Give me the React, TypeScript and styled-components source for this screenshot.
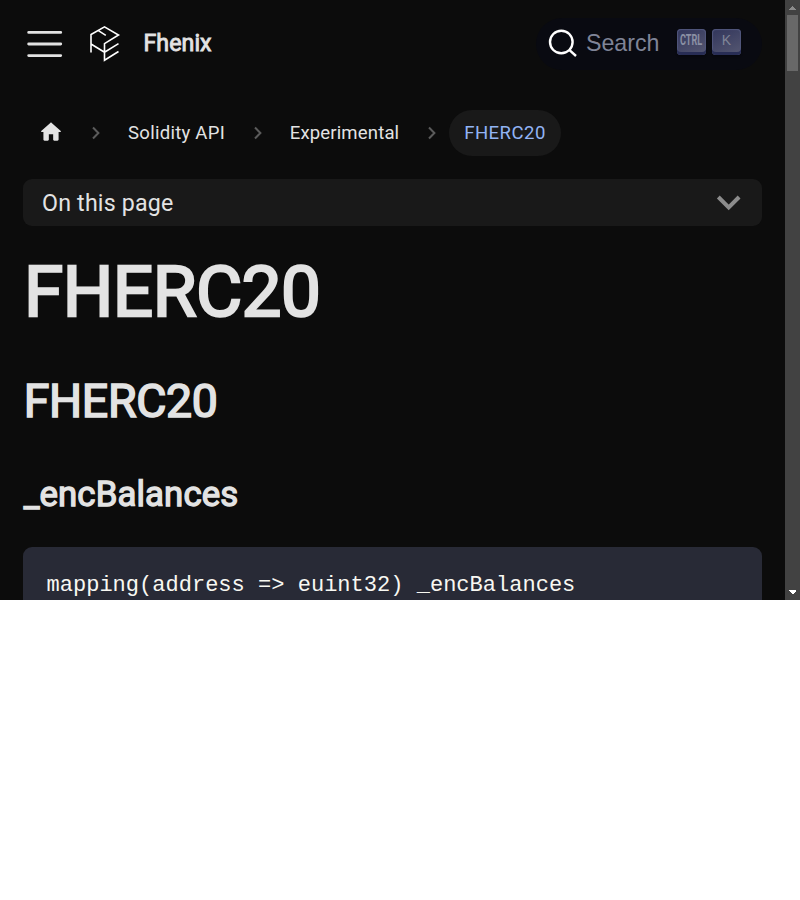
import React from "react";
import styled, { createGlobalStyle } from "styled-components";

const Global = createGlobalStyle`
  *, *::before, *::after { box-sizing: border-box; }
  body { margin: 0; background: #fff; }
  h1, h2, h3, pre, p { margin: 0; }
`;

const Window = styled.div`
  display: flex;
  width: 800px;
  height: 600px;
  overflow: hidden;
  background: #0c0c0c;
  color: #e3e3e3;
  font-family: Roboto, sans-serif;
`;
const Page = styled.div`
  width: 785px;
  height: 600px;
  overflow: hidden;
`;
const Navbar = styled.header`
  display: flex;
  align-items: center;
  height: 87px;
  padding: 0 23px;
`;
const MenuIcon = styled.svg`
  display: block;
  width: 44px;
  height: 44px;
`;
const Logo = styled.svg`
  display: block;
  width: 32px;
  height: 38px;
  margin-left: 21.5px;
`;
const Brand = styled.span`
  margin-left: 23px;
  margin-top: -2px;
  font-size: 23.2px;
  line-height: 28px;
  letter-spacing: 0.05px;
  -webkit-text-stroke: 0.85px currentColor;
`;
const SearchButton = styled.button`
  display: flex;
  align-items: center;
  width: 226px;
  height: 52px;
  margin: 0 0 0 auto;
  padding: 0 21px 0 12px;
  border: 0;
  border-radius: 40px;
  background: #090a11;
  color: #7f8497;
  font: 23.2px/28px "Liberation Sans", Arial, sans-serif;
`;
const SearchIcon = styled.svg`
  display: block;
  width: 29px;
  height: 29px;
  color: #fff;
`;
const SearchLabel = styled.span`
  margin-left: 9px;
  margin-top: -2px;
`;
const Keys = styled.span`
  display: flex;
  gap: 6px;
  margin-left: auto;
  margin-top: -3px;
`;
const Key = styled.span`
  display: flex;
  align-items: center;
  justify-content: center;
  width: 29px;
  height: 26px;
  padding-bottom: 4px;
  border-radius: 4px;
  background: linear-gradient(-26.5deg, #565872, #31355b);
  box-shadow: inset 0 -3px 0 0 #282d55, inset 0 0 1px 1px #51577d,
    0 2px 2px 0 rgba(3, 4, 9, 0.3);
  color: #7f8497;
  font-size: 14px;
  line-height: 20px;
`;
const CtrlLabel = styled.span`
  flex: none;
  color: #8b90a4;
  font: 700 14px/18px Roboto, sans-serif;
  transform: scaleX(0.65);
`;
const Breadcrumbs = styled.nav`
  display: flex;
  align-items: center;
  height: 46px;
  margin: 23px 23px 0;
  font-size: 18.56px;
  line-height: 30px;
`;
const Crumb = styled.span<{ $active?: boolean; $width: number; $tracking?: number }>`
  display: flex;
  align-items: center;
  justify-content: center;
  width: ${(p) => p.$width}px;
  height: 46px;
  border-radius: 23px;
  letter-spacing: ${(p) => p.$tracking ?? 0.2}px;
  white-space: nowrap;
  background: ${(p) => (p.$active ? "#191919" : "transparent")};
  color: ${(p) => (p.$active ? "#92b4f4" : "#e3e3e3")};
`;
const HomeIcon = styled.svg`
  display: block;
  width: 26px;
  height: 26px;
  margin-top: -3px;
`;
const Separator = styled.svg`
  display: block;
  flex: none;
  width: 10px;
  height: 14px;
  margin: 0 12px 0 13px;
`;
const TocButton = styled.div`
  display: flex;
  align-items: center;
  justify-content: space-between;
  height: 47px;
  margin: 23px 23px 0;
  padding: 1px 21px 0 19px;
  border-radius: 9px;
  background: #191919;
  font-size: 23.2px;
  letter-spacing: 0.2px;
`;
const TocArrow = styled.svg`
  display: block;
  width: 25px;
  height: 16px;
`;
const Title = styled.h1`
  margin: 22px 23px 0 23.9px;
  font-size: 71px;
  line-height: 87px;
  font-weight: 400;
  letter-spacing: -0.5px;
  -webkit-text-stroke: 2.4px currentColor;
`;
const Section = styled.h2`
  margin: 37px 23px 0 23.7px;
  font-size: 46.4px;
  line-height: 58px;
  font-weight: 400;
  letter-spacing: -0.3px;
  -webkit-text-stroke: 1.6px currentColor;
`;
const Subsection = styled.h3`
  margin: 42px 23px 0 23.7px;
  font-size: 34.8px;
  line-height: 44px;
  font-weight: 400;
  letter-spacing: 0.1px;
  -webkit-text-stroke: 1.3px currentColor;
`;
const CodeBlock = styled.pre`
  height: 80px;
  margin: 31px 23px 0;
  padding: 23px 23px 23px 23.5px;
  border-radius: 9px;
  background: #282a36;
  color: #f8f8f2;
  font: 22.04px/32px "Liberation Mono", monospace;
`;
const Scrollbar = styled.div`
  display: flex;
  flex-direction: column;
  align-items: center;
  width: 15px;
  height: 600px;
  background: #424242;
`;
const ScrollArrow = styled.svg`
  display: block;
  width: 15px;
  height: 15px;
  flex: none;
`;
const Thumb = styled.div`
  width: 11px;
  height: 56px;
  margin-bottom: auto;
  background: #686868;
`;

const Chevron = () => (
  <Separator viewBox="0 0 10 14" fill="none" stroke="#5b5b5b" strokeWidth="2">
    <path d="M2 1.500 7.400 7 2 12.500" />
  </Separator>
);

export default function App() {
  return (
    <>
      <Global />
      <Window>
        <Page>
          <Navbar>
            <MenuIcon viewBox="0 0 44 44" stroke="#e3e3e3" strokeWidth="2.9" strokeLinecap="round">
              <path d="M5.700 10.400h32M5.700 22h32M5.700 33.600h32" />
            </MenuIcon>
            <Logo viewBox="0 0 32 38" fill="none" stroke="#fff" strokeWidth="1.6">
              <path d="M2 27.500V9.500L15.500 1.800 29.500 10 15.500 18.600V35.300L29.500 26.500M2 19 15.500 27.300 29.500 18.600M9 5.300 16.800 10.300" />
            </Logo>
            <Brand>Fhenix</Brand>
            <SearchButton>
              <SearchIcon viewBox="0 0 29 29" fill="none" stroke="currentColor" strokeWidth="2.4">
                <circle cx="13.300" cy="13" r="11.300" />
                <path d="M21 20.700 28 27" />
              </SearchIcon>
              <SearchLabel>Search</SearchLabel>
              <Keys>
                <Key>
                  <CtrlLabel>CTRL</CtrlLabel>
                </Key>
                <Key>K</Key>
              </Keys>
            </SearchButton>
          </Navbar>
          <Breadcrumbs>
            <Crumb $width={55}>
              <HomeIcon viewBox="0 0 24 24" fill="currentColor">
                <path d="M10 19v-5h4v5c0 .55.45 1 1 1h3c.55 0 1-.45 1-1v-7h1.700c.46 0 .68-.57.33-.87L12.670 3.600c-.38-.34-.96-.34-1.340 0l-8.360 7.530c-.34.3-.13.87.33.87H5v7c0 .55.45 1 1 1h3c.55 0 1-.45 1-1z" />
              </HomeIcon>
            </Crumb>
            <Chevron />
            <Crumb $width={127} $tracking={0.25}>Solidity API</Crumb>
            <Chevron />
            <Crumb $width={139} $tracking={0.15}>Experimental</Crumb>
            <Chevron />
            <Crumb $width={112} $tracking={0.45} $active>FHERC20</Crumb>
          </Breadcrumbs>
          <TocButton>
            On this page
            <TocArrow viewBox="0 0 25 16" fill="none" stroke="#8c8c8c" strokeWidth="4">
              <path d="M2.300 2 12.700 12.400 23.100 2" />
            </TocArrow>
          </TocButton>
          <Title>FHERC20</Title>
          <Section>FHERC20</Section>
          <Subsection>_encBalances</Subsection>
          <CodeBlock>{"mapping(address => euint32) _encBalances"}</CodeBlock>
        </Page>
        <Scrollbar>
          <ScrollArrow viewBox="0 0 15 15" fill="#8b8b8b" shapeRendering="crispEdges">
            <path d="M4 10 7.500 6 11 10z" />
          </ScrollArrow>
          <Thumb />
          <ScrollArrow viewBox="0 0 15 15" fill="#fff" shapeRendering="crispEdges">
            <path d="M4 5h7v1L7.500 9.500 4 6z" />
          </ScrollArrow>
        </Scrollbar>
      </Window>
    </>
  );
}
